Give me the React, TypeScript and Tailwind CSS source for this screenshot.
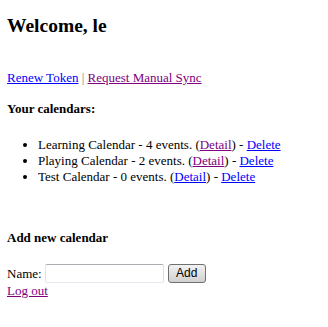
import React from "react";

const calendars = [
  { name: "Learning Calendar", events: 4, visited: true },
  { name: "Playing Calendar", events: 2, visited: true },
  { name: "Test Calendar", events: 0, visited: false },
];

export default function App() {
  return (
    <div className="min-h-[327px] bg-white pl-[7px] text-[13px] leading-[16px] text-black [font-family:'Liberation_Serif','Times_New_Roman',serif]">
      {/* Header */}
      <h2 className="pt-[14px] text-[19.5px] font-bold leading-[23px]">Welcome, le</h2>

      {/* Token links */}
      <p className="mt-[33px]">
        <a href="#" className="text-[#0000ff] underline">
          Renew Token
        </a>{" "}
        <span className="text-[#808080]">|</span>{" "}
        <a href="#" className="text-[#800080] underline">
          Request Manual Sync
        </a>
      </p>

      {/* Calendar list */}
      <h4 className="mt-[15px] font-bold">Your calendars:</h4>
      <ul className="mt-[20px] list-disc pl-[31px]">
        {calendars.map((c) => (
          <li key={c.name}>
            {c.name} - {c.events} events. (
            <a href="#" className={c.visited ? "text-[#800080] underline" : "text-[#0000ff] underline"}>
              Detail
            </a>
            ) -{" "}
            <a href="#" className="text-[#0000ff] underline">
              Delete
            </a>
          </li>
        ))}
      </ul>

      {/* Add form */}
      <h4 className="mt-[45px] font-bold">Add new calendar</h4>
      <form className="mt-[18px] flex h-[19px] items-center" onSubmit={(e) => e.preventDefault()}>
        <span>Name:</span>
        <input
          type="text"
          className="ml-[3px] h-[19px] w-[119px] rounded-[2px] border border-[#abadb3] border-b-[#e3e9ef] border-r-[#dbdfe6] border-l-[#e2e3ea] bg-white px-1 outline-none"
        />
        <button
          type="submit"
          className="ml-[4px] h-[19px] w-[38px] rounded-[3px] border border-[#707070] bg-gradient-to-b from-[#f2f2f2] to-[#d0d0d0] text-[12px] leading-[15px] [font-family:'Liberation_Sans',Arial,sans-serif]"
        >
          Add
        </button>
      </form>
      <a href="#" className="block text-[#800080] underline">
        Log out
      </a>
    </div>
  );
}
